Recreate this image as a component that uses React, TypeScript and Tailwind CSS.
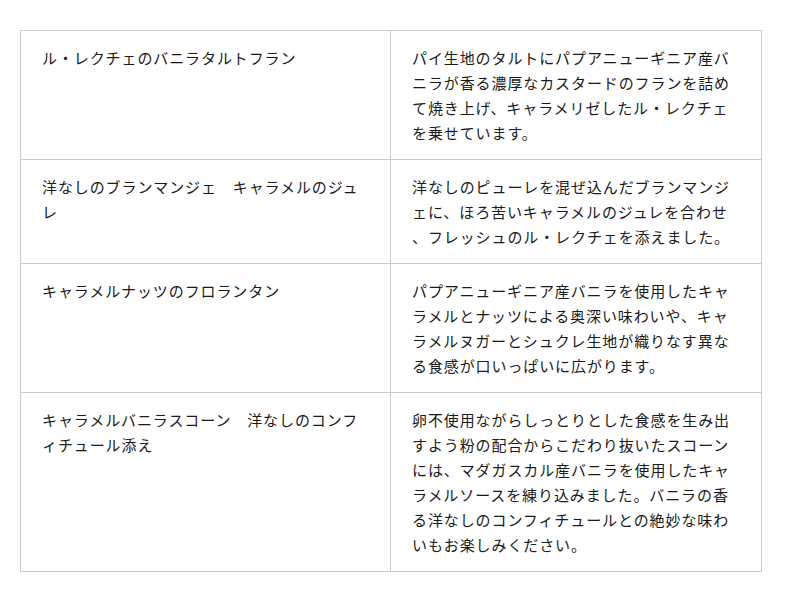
const rows = [
  {
    name: "ル・レクチェのバニラタルトフラン",
    desc: "パイ生地のタルトにパプアニューギニア産バニラが香る濃厚なカスタードのフランを詰めて焼き上げ、キャラメリゼしたル・レクチェを乗せています。",
  },
  {
    name: "洋なしのブランマンジェ　キャラメルのジュレ",
    desc: "洋なしのピューレを混ぜ込んだブランマンジェに、ほろ苦いキャラメルのジュレを合わせ、フレッシュのル・レクチェを添えました。",
  },
  {
    name: "キャラメルナッツのフロランタン",
    desc: "パプアニューギニア産バニラを使用したキャラメルとナッツによる奥深い味わいや、キャラメルヌガーとシュクレ生地が織りなす異なる食感が口いっぱいに広がります。",
  },
  {
    name: "キャラメルバニラスコーン　洋なしのコンフィチュール添え",
    desc: "卵不使用ながらしっとりとした食感を生み出すよう粉の配合からこだわり抜いたスコーンには、マダガスカル産バニラを使用したキャラメルソースを練り込みました。バニラの香る洋なしのコンフィチュールとの絶妙な味わいもお楽しみください。",
  },
];

export default function App() {
  return (
    <div className="min-h-[602px] bg-white pt-[30px] pl-[20px] font-['Noto_Sans_CJK_JP',sans-serif] text-[#1a1a1a]">
      <table className="w-[742px] table-fixed border-collapse">
        <tbody>
          {rows.map((r) => (
            <tr key={r.name}>
              <td className="w-[370px] border border-[#cccccc] px-[21px] py-[14px] align-top text-[15px] leading-[25px] tracking-[0.9px] [line-break:anywhere]">
                {r.name}
              </td>
              <td className="border border-[#cccccc] px-[21px] py-[14px] align-top text-[15px] leading-[25px] tracking-[0.9px] [line-break:anywhere]">
                {r.desc}
              </td>
            </tr>
          ))}
        </tbody>
      </table>
    </div>
  );
}
